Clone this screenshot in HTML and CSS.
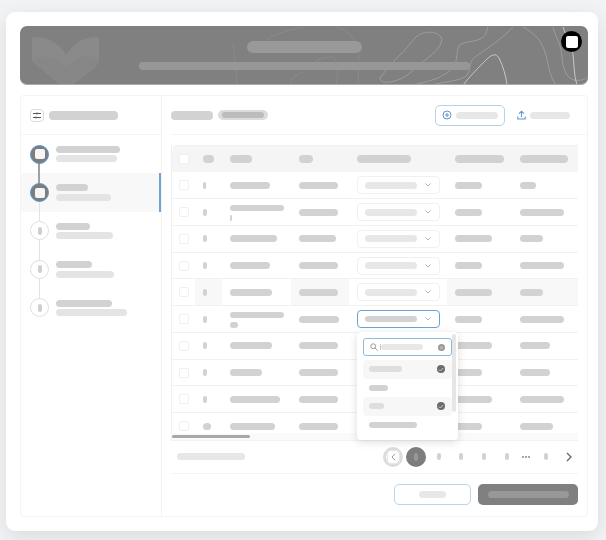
FILE: index.html
```html
<!DOCTYPE html>
<html lang="en">
<head>
<meta charset="utf-8">
<title>Import review</title>
<link rel="stylesheet" href="styles.css">
</head>
<body>
<main class="card">
  <header class="banner">
    <svg class="banner-art" viewBox="0 0 568 59" aria-hidden="true">
      <path class="logo" d="M12 11 Q24 11 32 15 Q41 20 46 29 Q52 20 60 15 Q68 11 79 11 V34 Q79 38 72 44 L52 59 H40 L19 41 Q12 36 12 34 Z"/>
      <path class="logo-facet" d="M12 34 Q24 28 34 33 L46 41 L56 33 Q68 27 79 34 Q79 38 72 44 L52 59 H40 L19 41 Q12 36 12 34 Z"/>
      <g transform="translate(-20 -26)" fill="none" stroke-width="1">
        <path class="c1" d="M441 37 C436 31 425 30 416 37 C408 45 404 52 400 55 C393 62 385 71 380 78 C380 83 388 83 394 81 C404 79 412 72 420 64 C430 56 445 46 441 37 Z"/>
        <path class="c1" d="M488 27 C486 33 486 36 480 39 C472 43 462 41 459 46 C456 52 458 60 454 65 C450 72 445 74 440 77 C432 81 420 83 413 85"/>
        <path class="c1" d="M513 27 C500 41 484 50 474 58 C468 63 472 70 466 76 C460 81 442 82 432 85"/>
        <path class="c2" d="M463 85 C470 76 480 66 486 60 C492 54 496 53 499 58 C503 66 506 76 507 85"/>
        <path class="c1" d="M523 27 C534 33 541 40 545 52 C548 62 549 76 556 85"/>
        <path class="c1" d="M553 27 C556 38 562 46 562 58 C563 68 566 78 574 80 C580 81 585 80 588 76"/>
        <path class="c2" d="M563 27 C566 36 572 46 573 54 C574 64 574 76 577 85"/>
        <path class="c0" d="M303 70 C312 62 322 57 332 57 C339 58 338 72 336 85"/>
        <path class="c0" d="M336 27 C345 29 352 34 356 44 C361 55 358 72 358 85"/>
        <path class="c0" d="M290 84 C292 76 298 74 303 72"/>
        <path class="c0" d="M233 43 C235 55 236 72 237 85"/>
        <path class="c0" d="M267 40 C275 33 290 30 303 27"/>
      </g>
    </svg>
    <span class="banner-title"></span>
    <span class="banner-sub"></span>
    <button class="close" type="button" aria-label="Close"><span></span></button>
  </header>

  <section class="panel">
    <aside class="sidebar">
      <div class="side-head">
        <span class="filter-icon">
          <svg width="8" height="7" viewBox="0 0 8 7" aria-hidden="true"><path d="M0 1.5H3M5 1.5H8M0 5.5H2M4 5.5H8" stroke="#555" stroke-width="1" fill="none"/><circle cx="4" cy="1.5" r="1" fill="#555"/><circle cx="3" cy="5.5" r="1" fill="#555"/></svg>
        </span>
        <span class="pill t w69 h9"></span>
      </div>
      <ol class="steps">
        <li class="step done"><span class="dot"><i></i></span><div class="step-text"><span class="pill t w64"></span><span class="pill s w61"></span></div></li>
        <li class="step done current"><span class="dot"><i></i></span><div class="step-text"><span class="pill t w32"></span><span class="pill s w55"></span></div></li>
        <li class="step"><span class="dot"><i></i></span><div class="step-text"><span class="pill t w34"></span><span class="pill s w57"></span></div></li>
        <li class="step"><span class="dot"><i></i></span><div class="step-text"><span class="pill t w36"></span><span class="pill s w58"></span></div></li>
        <li class="step"><span class="dot"><i></i></span><div class="step-text"><span class="pill t w56"></span><span class="pill s w71"></span></div></li>
      </ol>
    </aside>

    <div class="content">
      <div class="content-head">
        <div class="tabs">
          <span class="pill t w42 h9"></span>
          <span class="tab-chip"><span class="pill chip-in w42"></span></span>
        </div>
        <div class="actions">
          <button class="btn-add" type="button">
            <svg width="10" height="10" viewBox="0 0 10 10" aria-hidden="true"><circle cx="5" cy="5" r="4" fill="none" stroke="#5b9bd5" stroke-width="1"/><path d="M5 3V7M3 5H7" stroke="#5b9bd5" stroke-width="1"/></svg>
            <span class="pill l w42"></span>
          </button>
          <button class="btn-upload" type="button">
            <svg width="9" height="10" viewBox="0 0 9 10" aria-hidden="true"><path d="M4.5 7V1.5M2 3.7L4.5 1.2L7 3.7M.8 6.5V9H8.2V6.5" fill="none" stroke="#5b9bd5" stroke-width="1.1"/></svg>
            <span class="pill l w40"></span>
          </button>
        </div>
      </div>

      <div class="table-wrap">
        <div class="table-clip">
          <div class="row head">
            <div class="cell c-check"><span class="box white"></span></div>
            <div class="cell"><span class="pill t w11 h8"></span></div>
            <div class="cell"><span class="pill t w22 h8"></span></div>
            <div class="cell"><span class="pill t w14 h8"></span></div>
            <div class="cell"><span class="pill t w54 h8"></span></div>
            <div class="cell"><span class="pill t w49 h8"></span></div>
            <div class="cell"><span class="pill t w48 h8"></span></div>
          </div>

          <div class="row">
            <div class="cell c-check"><span class="box"></span></div>
            <div class="cell"><span class="pill r w3"></span></div>
            <div class="cell"><span class="pill r w40"></span></div>
            <div class="cell"><span class="pill r w39"></span></div>
            <div class="cell"><div class="select"><span class="pill l w52"></span><svg class="chev" width="6" height="4" viewBox="0 0 6 4" aria-hidden="true"><path d="M.5 .5L3 3L5.5 .5"/></svg></div></div>
            <div class="cell"><span class="pill r w27"></span></div>
            <div class="cell"><span class="pill r w16"></span></div>
          </div>

          <div class="row">
            <div class="cell c-check"><span class="box"></span></div>
            <div class="cell"><span class="pill r w4"></span></div>
            <div class="cell two"><span class="pill r w54 h6"></span><span class="pill r w2 h6"></span></div>
            <div class="cell"><span class="pill r w39"></span></div>
            <div class="cell"><div class="select"><span class="pill l w52"></span><svg class="chev" width="6" height="4" viewBox="0 0 6 4" aria-hidden="true"><path d="M.5 .5L3 3L5.5 .5"/></svg></div></div>
            <div class="cell"><span class="pill r w27"></span></div>
            <div class="cell"><span class="pill r w44"></span></div>
          </div>

          <div class="row">
            <div class="cell c-check"><span class="box"></span></div>
            <div class="cell"><span class="pill r w4"></span></div>
            <div class="cell"><span class="pill r w47"></span></div>
            <div class="cell"><span class="pill r w37"></span></div>
            <div class="cell"><div class="select"><span class="pill l w52"></span><svg class="chev" width="6" height="4" viewBox="0 0 6 4" aria-hidden="true"><path d="M.5 .5L3 3L5.5 .5"/></svg></div></div>
            <div class="cell"><span class="pill r w37"></span></div>
            <div class="cell"><span class="pill r w23"></span></div>
          </div>

          <div class="row">
            <div class="cell c-check"><span class="box"></span></div>
            <div class="cell"><span class="pill r w4"></span></div>
            <div class="cell"><span class="pill r w40"></span></div>
            <div class="cell"><span class="pill r w39"></span></div>
            <div class="cell"><div class="select"><span class="pill l w52"></span><svg class="chev" width="6" height="4" viewBox="0 0 6 4" aria-hidden="true"><path d="M.5 .5L3 3L5.5 .5"/></svg></div></div>
            <div class="cell"><span class="pill r w27"></span></div>
            <div class="cell"><span class="pill r w44"></span></div>
          </div>

          <div class="row">
            <div class="cell c-check"><span class="box"></span></div>
            <div class="cell tint"><span class="pill r w4"></span></div>
            <div class="cell"><span class="pill r w42"></span></div>
            <div class="cell tint"><span class="pill r w39"></span></div>
            <div class="cell"><div class="select"><span class="pill l w52"></span><svg class="chev" width="6" height="4" viewBox="0 0 6 4" aria-hidden="true"><path d="M.5 .5L3 3L5.5 .5"/></svg></div></div>
            <div class="cell tint"><span class="pill r w37"></span></div>
            <div class="cell tint"><span class="pill r w23"></span></div>
          </div>

          <div class="row">
            <div class="cell c-check"><span class="box"></span></div>
            <div class="cell"><span class="pill r w4"></span></div>
            <div class="cell two"><span class="pill r w54 h6"></span><span class="pill r w8 h6"></span></div>
            <div class="cell"><span class="pill r w40"></span></div>
            <div class="cell"><div class="select open"><span class="pill r w52 h6"></span><svg class="chev" width="6" height="4" viewBox="0 0 6 4" aria-hidden="true"><path d="M.5 .5L3 3L5.5 .5"/></svg></div></div>
            <div class="cell"><span class="pill r w27"></span></div>
            <div class="cell"><span class="pill r w44"></span></div>
          </div>

          <div class="row">
            <div class="cell c-check"><span class="box"></span></div>
            <div class="cell"><span class="pill r w4"></span></div>
            <div class="cell"><span class="pill r w42"></span></div>
            <div class="cell"><span class="pill r w39"></span></div>
            <div class="cell"></div>
            <div class="cell"><span class="pill r w37"></span></div>
            <div class="cell"><span class="pill r w30"></span></div>
          </div>

          <div class="row">
            <div class="cell c-check"><span class="box"></span></div>
            <div class="cell"><span class="pill r w4"></span></div>
            <div class="cell"><span class="pill r w32"></span></div>
            <div class="cell"><span class="pill r w39"></span></div>
            <div class="cell"></div>
            <div class="cell"><span class="pill r w27"></span></div>
            <div class="cell"><span class="pill r w30"></span></div>
          </div>

          <div class="row">
            <div class="cell c-check"><span class="box"></span></div>
            <div class="cell"><span class="pill r w4"></span></div>
            <div class="cell"><span class="pill r w50"></span></div>
            <div class="cell"><span class="pill r w39"></span></div>
            <div class="cell"></div>
            <div class="cell"><span class="pill r w37"></span></div>
            <div class="cell"><span class="pill r w44"></span></div>
          </div>

          <div class="row">
            <div class="cell c-check"><span class="box"></span></div>
            <div class="cell"><span class="pill r w8"></span></div>
            <div class="cell"><span class="pill r w45"></span></div>
            <div class="cell"><span class="pill r w39"></span></div>
            <div class="cell"></div>
            <div class="cell"><span class="pill r w27"></span></div>
            <div class="cell"><span class="pill r w33"></span></div>
          </div>
        </div>
        <div class="h-scroll"><span class="h-thumb"></span></div>

        <div class="dropdown">
          <div class="search">
            <svg width="8" height="8" viewBox="0 0 8 8" aria-hidden="true"><circle cx="3.2" cy="3.2" r="2.4" fill="none" stroke="#999" stroke-width="1"/><path d="M5 5L7.5 7.5" stroke="#999" stroke-width="1"/></svg>
            <span class="caret"></span>
            <span class="pill l w42 h6"></span>
            <span class="clear"></span>
          </div>
          <ul class="options">
            <li class="option on"><span class="pill o w33"></span><span class="tick"><svg width="6" height="5" viewBox="0 0 6 5" aria-hidden="true"><path d="M.8 2.5L2.3 4L5.2 1" fill="none" stroke="#ccc" stroke-width="1"/></svg></span></li>
            <li class="option"><span class="pill r w19 h6"></span></li>
            <li class="option on"><span class="pill o w15"></span><span class="tick"><svg width="6" height="5" viewBox="0 0 6 5" aria-hidden="true"><path d="M.8 2.5L2.3 4L5.2 1" fill="none" stroke="#ccc" stroke-width="1"/></svg></span></li>
            <li class="option"><span class="pill r w48 h6"></span></li>
          </ul>
          <span class="v-thumb"></span>
        </div>
      </div>

      <nav class="pager">
        <span class="pill l w68"></span>
        <div class="pages">
          <span class="page"><span class="prev"><svg width="5" height="8" viewBox="0 0 5 8" aria-hidden="true"><path d="M4 .8L1 4L4 7.2" fill="none" stroke="#999" stroke-width="1"/></svg></span></span>
          <span class="page"><span class="current-page"><i></i></span></span>
          <span class="page"><i class="mark"></i></span>
          <span class="page"><i class="mark"></i></span>
          <span class="page"><i class="mark"></i></span>
          <span class="page"><i class="mark"></i></span>
          <span class="page more"><i></i><i></i><i></i></span>
          <span class="page"><i class="mark"></i></span>
          <span class="page"><svg width="6" height="10" viewBox="0 0 6 10" aria-hidden="true"><path d="M1 1L5 5L1 9" fill="none" stroke="#666" stroke-width="1.3"/></svg></span>
        </div>
      </nav>

      <footer class="foot">
        <button class="btn-cancel" type="button"><span class="pill l w27"></span></button>
        <button class="btn-primary" type="button"><span class="pill p w81"></span></button>
      </footer>
    </div>
  </section>
</main>
</body>
</html>
```

FILE: styles.css
```css
* { box-sizing: border-box; }
html, body { margin: 0; height: 100%; }
body { background: #f2f3f5; overflow: hidden; font-family: "Liberation Sans", sans-serif; }
ol, ul { list-style: none; margin: 0; padding: 0; }
button { border: 0; padding: 0; background: none; font: inherit; }

.card {
  width: 592px; height: 519px; margin: 12px 0 0 6px; padding: 14px 10px 14px 14px;
  background: #fff; border-radius: 9px; box-shadow: 0 6px 22px rgba(0,0,0,.1);
  display: flex; flex-direction: column; gap: 10px;
  filter: blur(.45px);
}

/* pills */
.pill { display: block; height: 7px; border-radius: 4px; flex: none; }
.t { background: #d2d2d2; }
.s { background: #e4e4e4; }
.r { background: #d2d2d2; }
.l { background: #e7e7e7; }
.o { background: #dedede; height: 6px; }
.p { background: #989898; }
.h6 { height: 6px; }
.h8 { height: 8px; }
.h9 { height: 9px; }
.w2 { width: 2px; } .w3 { width: 3px; } .w4 { width: 4px; } .w8 { width: 8px; } .w11 { width: 11px; }
.w14 { width: 14px; } .w15 { width: 15px; } .w16 { width: 16px; } .w19 { width: 19px; } .w22 { width: 22px; }
.w23 { width: 23px; } .w27 { width: 27px; } .w30 { width: 30px; } .w32 { width: 32px; } .w33 { width: 33px; }
.w34 { width: 34px; } .w36 { width: 36px; } .w37 { width: 37px; } .w39 { width: 39px; } .w40 { width: 40px; }
.w42 { width: 42px; } .w44 { width: 44px; } .w45 { width: 45px; } .w47 { width: 47px; } .w48 { width: 48px; }
.w49 { width: 49px; } .w50 { width: 50px; } .w52 { width: 52px; } .w54 { width: 54px; } .w55 { width: 55px; }
.w56 { width: 56px; } .w57 { width: 57px; } .w58 { width: 58px; } .w61 { width: 61px; } .w64 { width: 64px; }
.w68 { width: 68px; } .w69 { width: 69px; } .w71 { width: 71px; } .w81 { width: 81px; }

/* banner */
.banner {
  position: relative; flex: none; height: 59px; background: #808080; border-radius: 7px;
  overflow: hidden; border-bottom: 1px solid #aaa;
  display: flex; flex-direction: column; align-items: center;
}
.banner-art { position: absolute; left: 0; top: 0; width: 568px; height: 59px; }
.logo { fill: #8a8a8a; }
.logo-facet { fill: #878787; }
.c0 { stroke: rgba(255,255,255,.08); }
.c1 { stroke: rgba(255,255,255,.22); }
.c2 { stroke: rgba(255,255,255,.55); }
.banner-title { position: relative; width: 115px; height: 12px; margin-top: 15px; background: #999; border-radius: 6px; }
.banner-sub { position: relative; width: 331px; height: 8px; margin-top: 9px; background: #979797; border-radius: 4px; }
.close {
  position: absolute; right: 6px; top: 5px; width: 21px; height: 21px; border-radius: 50%; background: #000;
  display: flex; align-items: center; justify-content: center;
}
.close span { width: 12px; height: 12px; background: #fff; border-radius: 2px; }

/* panel */
.panel { flex: 1; display: flex; border: 1px solid #f4f4f4; border-radius: 4px; min-height: 0; }

/* sidebar */
.sidebar { flex: none; width: 141px; border-right: 1px solid #f2f2f2; }
.side-head { height: 39px; display: flex; align-items: center; gap: 5px; padding-left: 9px; border-bottom: 1px solid #f4f4f4; }
.filter-icon { width: 14px; height: 13px; border: 1px solid #dcdcdc; border-radius: 4px; display: flex; align-items: center; justify-content: center; }
.step { position: relative; height: 38.4px; display: flex; align-items: center; gap: 7px; padding-left: 9px; }
.step::after { content: ""; position: absolute; z-index: 1; left: 17.5px; top: 50%; width: 1px; height: 100%; background: #e2e2e2; }
.step:last-child::after { display: none; }
.step.done:not(.current)::after { width: 2px; left: 17px; background: #a0a0a0; }
.step.current { background: #f8f8f8; box-shadow: inset -2px 0 0 #6ea2d0; }
.dot {
  position: relative; z-index: 2; flex: none; width: 19px; height: 19px; border-radius: 50%;
  background: #fff; border: 1px solid #e0e0e0;
  display: flex; align-items: center; justify-content: center;
}
.dot i { width: 4px; height: 8px; border-radius: 2px; background: #cfcfcf; }
.done .dot { background: #7d7d7d; border: 1.5px solid #5d96c8; }
.done .dot i { width: 10px; height: 10px; border-radius: 2px; background: #f6f6f6; }
.step-text { display: flex; flex-direction: column; gap: 2.5px; }

/* content */
.content { flex: 1; min-width: 0; padding-left: 9px; display: flex; flex-direction: column; }
.content-head {
  flex: none; height: 39px; display: flex; align-items: center; justify-content: space-between;
  padding-right: 7px; border-bottom: 1px solid #f4f4f4;
}
.tabs { display: flex; align-items: center; gap: 5px; }
.tab-chip { width: 50px; height: 10px; border-radius: 5px; background: #dcdcdc; display: flex; align-items: center; justify-content: center; }
.chip-in { background: #bcbcbc; height: 6px; }
.actions { display: flex; align-items: center; gap: 12px; margin-right: 2px; }
.btn-add {
  width: 70px; height: 21px; border: 1px solid #b4d2e8; border-radius: 5px;
  display: flex; align-items: center; gap: 4px; padding-left: 6px;
}
.btn-upload { display: flex; align-items: center; gap: 4px; padding-right: 10px; margin-right: -2px; }

/* table */
.table-wrap { position: relative; flex: none; width: 407px; height: 296px; margin-top: 10px; border-left: 1px solid #f0f0f0; }
.table-clip { height: 288px; overflow: hidden; border-top: 1px solid #f0f0f0; border-top-left-radius: 5px; }
.row {
  display: grid; grid-template-columns: 23px 27px 69px 58px 98px 65px 66px;
  height: 26.75px; border-bottom: 1px solid #f1f1f1;
}
.row.head { height: 26.4px; background: #f5f5f5; border-bottom: 0; }
.cell { display: flex; align-items: center; padding-left: 8px; min-width: 0; }
.cell.two { flex-direction: column; align-items: flex-start; justify-content: center; gap: 4px; padding-top: 1px; }
.cell.tint { background: #f8f8f8; }
.c-check { padding-left: 7px; }
.box { width: 10px; height: 10px; border: 1px solid #f0f0f0; border-radius: 2px; background: #fff; }
.box.white { border-color: #f1f1f1; }
.select {
  width: 83px; height: 18px; border: 1px solid #f0f0f0; border-radius: 4px;
  display: flex; align-items: center; justify-content: space-between; padding: 0 8px 0 7px;
}
.select.open { border: 1.5px solid #6fa3cf; }
.chev path { fill: none; stroke: #b5b5b5; stroke-width: 1; }
.h-scroll { height: 8px; background: #fafafa; border-bottom: 1px solid #f2f2f2; padding-top: 2px; }
.h-thumb { display: block; width: 78px; height: 3px; background: #a8a8a8; border-radius: 2px; }

/* dropdown */
.dropdown {
  position: absolute; left: 185px; top: 187px; width: 101px; height: 108px; background: #fff;
  border-radius: 4px; box-shadow: 0 2px 8px rgba(0,0,0,.14); padding: 6px;
}
.search {
  width: 89px; height: 18px; border: 1px solid #8fbadc; border-radius: 3px;
  display: flex; align-items: center; padding: 0 6px;
}
.caret { width: 1px; height: 6px; background: #ccc; margin-left: 2px; }
.search .pill { margin-right: 16px; }
.clear { position: absolute; left: 81px; top: 12px; width: 7px; height: 7px; border-radius: 50%; background: #8f8f8f; border: 2px solid #9a9a9a; box-shadow: inset 0 0 0 1px #ccc; }
.options { margin-top: 4px; width: 89px; }
.option { height: 18.5px; display: flex; align-items: center; justify-content: space-between; padding: 0 7px 0 6px; border-radius: 4px; }
.option.on { background: #f7f7f7; }
.tick { width: 8px; height: 8px; border-radius: 50%; background: #6b6b6b; display: flex; align-items: center; justify-content: center; }
.v-thumb { position: absolute; left: 95px; top: 2px; width: 4px; height: 78px; background: #e6e6e6; border-radius: 2px; }

/* pager */
.pager {
  flex: none; width: 407px; height: 33px; padding: 0 0 1px 6px; border-bottom: 1px solid #f4f4f4;
  display: flex; align-items: center; justify-content: space-between;
}
.pages { display: flex; align-items: center; margin-right: -2px; }
.page { width: 22.8px; height: 20px; display: flex; align-items: center; justify-content: center; }
.prev { width: 20px; height: 20px; border-radius: 50%; border: 3px solid #dcdcdc; background: #fff; display: flex; align-items: center; justify-content: center; }
.prev svg { box-sizing: content-box; flex: none; padding: 2px 3px; border: 1px solid #e6e6e6; border-radius: 3px; }
.current-page { flex: none; width: 20px; height: 20px; border-radius: 50%; background: #7d7d7d; display: flex; align-items: center; justify-content: center; }
.current-page i { width: 4px; height: 8px; border-radius: 2px; background: #979797; }
.mark { width: 4px; height: 7px; border-radius: 2px; background: #d2d2d2; }
.page.more { width: 16px; gap: 1px; }
.page.more i { width: 2px; height: 2px; border-radius: 1px; background: #8a8a8a; }

/* footer */
.foot { flex: none; width: 407px; display: flex; justify-content: flex-end; gap: 7px; margin-top: 10px; }
.btn-cancel { width: 77px; height: 21px; border: 1px solid #b9d5e8; border-radius: 5px; display: flex; align-items: center; justify-content: center; }
.btn-primary { width: 100px; height: 21px; background: #808080; border-radius: 5px; display: flex; align-items: center; justify-content: center; }
```
